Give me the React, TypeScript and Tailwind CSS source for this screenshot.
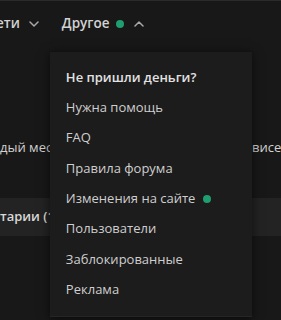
import React from 'react';

const Chevron: React.FC<{ up?: boolean }> = ({ up }) => (
  <svg width="10" height="6" viewBox="0 0 10 6" className="shrink-0">
    <polyline
      points={up ? '1,5 5,1 9,5' : '1,1 5,5 9,1'}
      fill="none"
      stroke="#a8a8a8"
      strokeWidth="1.5"
      strokeLinecap="round"
      strokeLinejoin="round"
    />
  </svg>
);

const Dot: React.FC = () => <span className="inline-block w-[8px] h-[8px] rounded-full bg-[#1f9e6f] shrink-0" />;

const menuItems = [
  { label: 'Нужна помощь' },
  { label: 'FAQ' },
  { label: 'Правила форума' },
  { label: 'Изменения на сайте', dot: true },
  { label: 'Пользователи' },
  { label: 'Заблокированные' },
  { label: 'Реклама' },
];

const App: React.FC = () => {
  return (
    <div className="relative w-full h-[320px] overflow-hidden bg-[#181818] text-[#d2d2d2] border-t border-[#2a2a2a] font-['Open_Sans',sans-serif]">
      <nav className="flex items-center h-[45px] ml-[-4px] text-[13.5px] font-semibold whitespace-nowrap">
        <div className="flex items-center gap-[9px]">
          <span>ети</span>
          <Chevron />
        </div>
        <div className="relative flex items-center ml-[23px]">
          <span>Другое</span>
          <span className="ml-[7px]"><Dot /></span>
          <span className="ml-[10px]"><Chevron up /></span>

          <div className="absolute left-[-12px] top-[38px] w-[202px] z-10 bg-[#1c1c1c] border-t border-[#121212] border-b border-b-[#262626] shadow-[0_2px_10px_rgba(0,0,0,0.6)] pt-[10px] pb-[11px] text-[13px] font-normal">
            <div className="h-[30.3px] flex items-center px-4 font-semibold text-[#e2e2e2]">Не пришли деньги?</div>
            {menuItems.map((item) => (
              <div key={item.label} className="h-[30.3px] flex items-center gap-[8px] px-4 text-[#cfcfcf]">
                <span>{item.label}</span>
                {item.dot && <Dot />}
              </div>
            ))}
          </div>
        </div>
      </nav>

      <div className="flex flex-col text-[13px] whitespace-nowrap">
        <div className="mt-[92px] flex h-[20px] items-center">
          <span className="w-[50px] overflow-hidden shrink-0">дый мес</span>
          <span className="flex-1" />
          <span className="w-[29px] overflow-hidden shrink-0">висе</span>
        </div>
        <div className="mt-[40px] h-[38px] bg-[#232323] flex items-center font-semibold text-[#d8d8d8]">
          <span>тарии (1</span>
        </div>
      </div>
    </div>
  );
};

export default App;
